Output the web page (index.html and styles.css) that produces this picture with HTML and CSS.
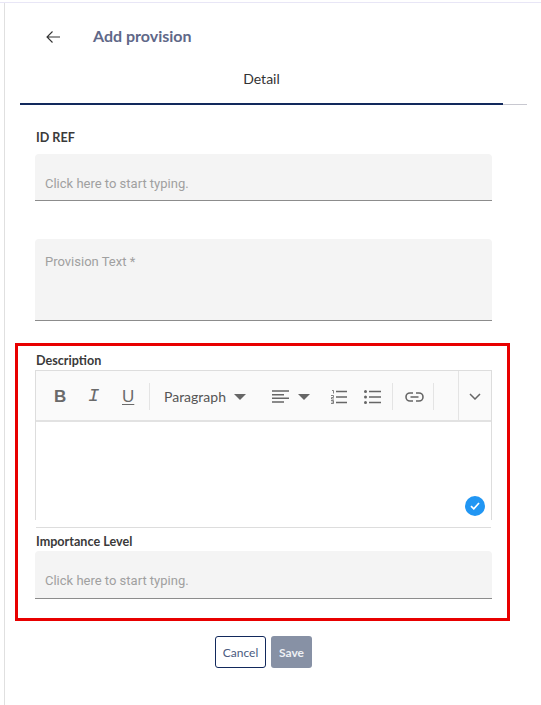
FILE: index.html
```html
<!DOCTYPE html>
<html lang="en">
<head>
    <meta charset="UTF-8">
    <meta name="viewport" content="width=device-width, initial-scale=1.0">
    <title>Add provision</title>
    <link rel="stylesheet" href="styles.css">
</head>
<body>
    <div class="page">
        <!-- header -->
        <div class="header">
            <button class="back-btn" type="button" aria-label="Back">
                <svg width="14" height="12" viewBox="0 0 14 12"><path d="M14 6H1M6.500 .5L1 6l5.500 5.500" fill="none" stroke="#333" stroke-width="1.100"/></svg>
            </button>
            <h1 class="title">Add provision</h1>
        </div>

        <!-- tabs -->
        <div class="tabs">
            <div class="tab-active">Detail</div>
        </div>

        <form class="form">
            <label class="label label-id">ID REF</label>
            <div class="field">Click here to start typing.</div>

            <div class="field field-tall">Provision Text *</div>

            <!-- highlighted block -->
            <div class="highlight">
                <label class="label">Description</label>
                <div class="editor">
                    <div class="toolbar">
                        <span class="tool-group">
                            <span class="tool tool-b">B</span>
                            <span class="tool tool-i">I</span>
                            <span class="tool tool-u">U</span>
                        </span>
                        <span class="sep"></span>
                        <span class="dropdown">Paragraph <i class="caret"></i></span>
                        <span class="align-drop">
                            <svg width="17" height="13" viewBox="0 0 17 13"><path d="M0 1h17M0 4.670h12M0 8.330h17M0 12h12" stroke="#666" stroke-width="1.500"/></svg>
                            <i class="caret"></i>
                        </span>
                        <svg class="list-num" width="16" height="14" viewBox="0 0 16 14"><path d="M5 1.500h11M5 7h11M5 12.500h11" stroke="#666" stroke-width="1.500"/><path d="M1 .5h1.500v3M0 5.500h2.500v2H.500v1.500H3M0 10.500h2.500v3H0M.5 12h2" fill="none" stroke="#666" stroke-width=".8"/></svg>
                        <svg class="list-dot" width="17" height="14" viewBox="0 0 17 14"><path d="M5 1.500h12M5 7h12M5 12.500h12" stroke="#666" stroke-width="1.500"/><circle cx="1.500" cy="1.500" r="1.500" fill="#666"/><circle cx="1.500" cy="7" r="1.500" fill="#666"/><circle cx="1.500" cy="12.500" r="1.500" fill="#666"/></svg>
                        <span class="sep"></span>
                        <svg class="link-icon" width="19" height="10" viewBox="0 0 19 10"><path d="M8 1H5a4 4 0 0 0 0 8h3M11 1h3a4 4 0 0 1 0 8h-3M5.500 5h8" fill="none" stroke="#666" stroke-width="1.600"/></svg>
                        <span class="sep"></span>
                        <span class="sep sep-end"></span>
                        <span class="more">
                            <svg width="12" height="7" viewBox="0 0 12 7"><path d="M1 1l5 5 5-5" fill="none" stroke="#666" stroke-width="1.500"/></svg>
                        </span>
                    </div>
                    <div class="editor-body">
                        <span class="check">
                            <svg width="10" height="8" viewBox="0 0 10 8"><path d="M1 4.200l2.800 2.600L9 1" fill="none" stroke="#fff" stroke-width="1.700"/></svg>
                        </span>
                    </div>
                </div>
                <div class="editor-line"></div>
                <label class="label label-level">Importance Level</label>
                <div class="field field-short">Click here to start typing.</div>
            </div>

            <div class="actions">
                <button class="btn-cancel" type="button">Cancel</button>
                <button class="btn-save" type="button">Save</button>
            </div>
        </form>
    </div>
</body>
</html>
```

FILE: styles.css
```css
body {
    font-family: "Lato", Arial, sans-serif;
    background-color: #ffffff;
    margin: 0;
    padding: 0;
}

.page {
    height: 703px;
    margin-top: 2px;
    border-top: 1px solid #e8e6f6;
    box-sizing: border-box;
    overflow: hidden;
    position: relative;
}

/* thin line down the left side */
.page::before {
    content: "";
    position: absolute;
    left: 4px;
    top: 0;
    bottom: 0;
    width: 1px;
    background-color: #e0e0e0;
}

.header {
    display: flex;
    align-items: center;
    height: 66px;
    padding-left: 46px;
}

.back-btn {
    display: flex;
    width: 47px;
    margin-top: 2px;
    padding: 0;
    border: none;
    background: none;
}

.title {
    margin: 0 0 2px;
    font-size: 16px;
    font-weight: 700;
    color: #5f6888;
}

.tabs {
    margin: 0 14px 0 20px;
    border-bottom: 1px solid #c8c8d0;
}

.tab-active {
    width: 483px;
    height: 36px;
    box-sizing: border-box;
    padding-top: 1px;
    text-align: center;
    font-size: 14px;
    color: #333;
    border-bottom: 2px solid #12295c;
    margin-bottom: -1px;
}

.form {
    padding-left: 35px;
    width: 457px;
}

.label {
    display: block;
    font-size: 12.6px;
    font-weight: 700;
    line-height: 16px;
    color: #3a3a3a;
}

.label-id {
    margin: 25px 0 8px 1px;
}

.field {
    height: 47px;
    box-sizing: border-box;
    padding: 22px 0 0 10px;
    background-color: #f4f4f4;
    border-bottom: 1px solid #8c8c8c;
    border-radius: 4px 4px 0 0;
    font-family: "Roboto", Arial, sans-serif;
    font-size: 13px;
    line-height: 15px;
    color: #a0a0a0;
}

.field-tall {
    height: 82px;
    margin-top: 38px;
    padding-top: 15px;
}

.field-short {
    height: 48px;
    margin-top: 1px;
}

.highlight {
    margin: 22px -18px 0 -20px;
    padding: 7px 15px 0 17px;
    border: 3px solid #e80000;
    height: 278px;
    box-sizing: border-box;
}

.highlight .label {
    margin-left: 1px;
}

.editor {
    margin-top: 1px;
    border: solid #dddddd;
    border-width: 1px 1px 0;
}

.toolbar {
    display: flex;
    align-items: center;
    height: 47px;
    padding-top: 2px;
    background-color: #fafafa;
    border-bottom: 2px solid #e2e2e2;
    color: #6a6a6a;
}

.toolbar > * {
    flex-shrink: 0;
}

.tool-group {
    display: flex;
    padding-left: 18px;
    width: 113px;
    box-sizing: border-box;
}

.tool {
    flex: none;
    width: 34px;
    font-size: 17px;
    line-height: 17px;
    font-family: "Liberation Sans", Arial, sans-serif;
}

.tool-b {
    font-weight: 700;
}

.tool-i {
    font-style: italic;
    font-family: "Liberation Mono", monospace;
    font-size: 19px;
}

.tool-u {
    text-decoration: underline;
    text-underline-offset: 2px;
}

.sep {
    width: 1px;
    height: 27px;
    background-color: #e4e4e4;
}

.dropdown {
    display: flex;
    align-items: center;
    width: 122px;
    padding-left: 14px;
    box-sizing: border-box;
    font-size: 14px;
    color: #555;
}

.caret {
    display: inline-block;
    margin-left: 8px;
    border: solid transparent;
    border-width: 6px 6px 0;
    border-top-color: #666;
}

.align-drop {
    display: flex;
    align-items: center;
    width: 59px;
}

.align-drop .caret {
    margin-left: 9px;
}

.list-num {
    margin-right: 17px;
}

.list-dot {
    margin-right: 11px;
}

.link-icon {
    margin: 0 9px 0 12px;
}

.sep-end {
    height: 49px;
    margin: -2px 0 0 24px;
}

.more {
    display: flex;
    justify-content: center;
    flex: 1;
}

.editor-body {
    position: relative;
    height: 98px;
}

.check {
    position: absolute;
    right: 6px;
    bottom: 4px;
    display: flex;
    align-items: center;
    justify-content: center;
    width: 20px;
    height: 20px;
    border-radius: 50%;
    background-color: #2196f3;
}

.editor-line {
    height: 1px;
    margin: 7px 1px 6px 1px;
    background-color: #dddddd;
}

.actions {
    display: flex;
    justify-content: center;
    gap: 5px;
    margin-top: 15px;
}

.btn-cancel,
.btn-save {
    height: 32px;
    border-radius: 3px;
    font-family: "Lato", Arial, sans-serif;
    font-size: 12px;
    padding: 0;
}

.btn-cancel {
    width: 51px;
    background-color: white;
    border: 1px solid #12295c;
    color: #4a5a80;
}

.btn-save {
    width: 41px;
    background-color: #8791a5;
    border: none;
    color: #eef0f4;
    font-weight: 700;
}
```
